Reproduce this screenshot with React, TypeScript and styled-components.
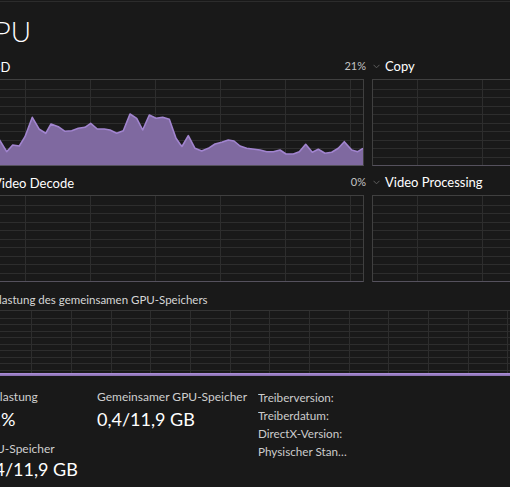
import React from 'react';
import styled, { createGlobalStyle } from 'styled-components';

type Point = [number, number];

const GlobalStyle = createGlobalStyle`
  html, body {
    margin: 0;
    padding: 0;
    background: #191919;
    overflow: hidden;
  }
  body {
    font-family: Lato, "Noto Sans", sans-serif;
    color: #ffffff;
  }
`;

// 3D engine trace, in page pixels
const load3d: Point[] = [
  [-20, 133], [-12, 128], [-5, 134], [0, 140.7], [6.7, 151.7], [12.7, 145], [19.3, 146],
  [25, 136.7], [32.3, 117.3], [39.3, 129.3], [45.7, 133.3], [51, 124], [58.3, 126.7],
  [65, 131.3], [71.7, 130.7], [78.3, 128.3], [85, 127.3], [90.7, 123.3], [97.3, 129],
  [104.3, 129], [110, 130], [116.7, 133.3], [123.3, 130.7], [130, 114], [136.7, 118.3],
  [142.7, 130], [149.3, 115], [156, 118.3], [162.7, 117.3], [169.3, 119.3], [176, 138.3],
  [180, 144], [182, 146.5], [188.3, 135.7], [195, 148.3], [201.7, 151], [208.3, 148.3],
  [215, 144], [221.7, 142.3], [228.3, 140], [234, 141], [240, 146], [246.7, 148.3],
  [260, 150], [266.7, 151.7], [273.3, 151.7], [280, 150], [286, 154], [293.3, 154],
  [299.3, 151.7], [305.7, 144.3], [312.3, 152.3], [318.3, 149.3], [325, 153.3],
  [331.7, 152.3], [338.3, 148.3], [344.3, 141.7], [351.7, 150], [357.7, 151.7], [363, 148.3],
];

const toLocal = (pts: Point[], ox: number, oy: number): Point[] =>
  pts.map(([x, y]) => [x - ox, y - oy]);

interface ChartProps {
  width: number;
  height: number;
  rows: number;
  colStep: number;
  colOffset: number;
  points?: Point[];
  level?: number;
}

const Chart: React.FC<ChartProps> = ({ width, height, rows, colStep, colOffset, points, level }) => {
  const hLines: number[] = [];
  for (let i = 1; i < rows; i++) hLines.push(Math.round((i * height) / rows) + 0.5);
  const vLines: number[] = [];
  for (let x = colOffset; x < width; x += colStep) vLines.push(Math.round(x) + 0.5);

  let area = '';
  let line = '';
  if (points && points.length) {
    line = points.map(([x, y], i) => `${i ? 'L' : 'M'}${x.toFixed(1)},${y.toFixed(1)}`).join(' ');
    area = `M${points[0][0]},${height} ${line.replace(/^M/, 'L')} L${points[points.length - 1][0]},${height} Z`;
  }
  const band = level !== undefined ? Math.max(2, level * height) : 0;

  return (
    <svg width={width} height={height} viewBox={`0 0 ${width} ${height}`} style={{ display: 'block' }}>
      <g stroke="#2d2d2d" strokeWidth={1} shapeRendering="crispEdges">
        {hLines.map(y => (
          <line key={`h${y}`} x1={0} x2={width} y1={y} y2={y} />
        ))}
        {vLines.map(x => (
          <line key={`v${x}`} x1={x} x2={x} y1={0} y2={height} />
        ))}
      </g>
      {area && (
        <>
          <path d={area} fill="#7f69a0" />
          <path d={line} fill="none" stroke="#a184cf" strokeWidth={1.6} strokeLinejoin="round" />
        </>
      )}
      {band > 0 && (
        <>
          <rect x={0} y={height - band} width={width} height={band} fill="#8d74b3" />
          <line x1={0} x2={width} y1={height - band} y2={height - band} stroke="#a88ad6" strokeWidth={1.4} />
        </>
      )}
    </svg>
  );
};

const Chevron: React.FC = () => (
  <ChevronIcon width={7} height={5} viewBox="0 0 7 5">
    <polyline points="0.5,0.8 3.5,3.8 6.5,0.8" fill="none" stroke="#5e5e5e" strokeWidth={1} />
  </ChevronIcon>
);

interface EngineProps {
  name: string;
  percent?: string;
  points?: Point[];
}

const Engine: React.FC<EngineProps> = ({ name, percent, points }) => (
  <EngineBox>
    <EngineHeader>
      <EngineName>
        <Chevron />
        {name}
      </EngineName>
      {percent && <Percent>{percent}</Percent>}
    </EngineHeader>
    <EngineFrame>
      <Chart width={382} height={85} rows={10} colStep={65} colOffset={44} points={points} />
    </EngineFrame>
  </EngineBox>
);

const App: React.FC = () => {
  return (
    <Window>
      <GlobalStyle />
      <Page>
        <Title>GPU</Title>
        <EngineGrid>
          <Engine name="3D" percent="21%" points={toLocal(load3d, -19, 80)} />
          <Engine name="Copy" />
          <Engine name="Video Decode" percent="0%" />
          <Engine name="Video Processing" />
        </EngineGrid>
        <SharedHeader>Auslastung des gemeinsamen GPU-Speichers</SharedHeader>
        <SharedFrame>
          <Chart width={774} height={65} rows={10} colStep={39.67} colOffset={10.7} level={0.4 / 11.9} />
        </SharedFrame>
        <Stats>
          <StatColumn width={117}>
            <StatLabel>Auslastung</StatLabel>
            <StatValue>21%</StatValue>
            <StatLabel $spaced>GPU-Speicher</StatLabel>
            <StatValue $tight>0,4/11,9 GB</StatValue>
          </StatColumn>
          <StatColumn width={161}>
            <StatLabel>Gemeinsamer GPU-Speicher</StatLabel>
            <StatValue>0,4/11,9 GB</StatValue>
          </StatColumn>
          <InfoList>
            <InfoLabel>Treiberversion:</InfoLabel>
            <InfoLabel>Treiberdatum:</InfoLabel>
            <InfoLabel>DirectX-Version:</InfoLabel>
            <InfoLabel>Physischer Standort:</InfoLabel>
          </InfoList>
        </Stats>
      </Page>
    </Window>
  );
};

export default App;

const Window = styled.div`
  height: 487px;
  padding-top: 1px;
  box-sizing: border-box;
  overflow: hidden;
`;

const Page = styled.div`
  border-top: 1px solid #2c2c2c;
  margin-left: -20px;
  width: 776px;
`;

const Title = styled.h1`
  margin: 15px 0 0 -6px;
  font-size: 28px;
  line-height: 29px;
  font-weight: 300;
  color: #ffffff;
`;

const EngineGrid = styled.div`
  display: grid;
  grid-template-columns: 384px 384px;
  column-gap: 8px;
  row-gap: 8px;
  margin-top: 12px;
`;

const EngineBox = styled.div`
  display: flex;
  flex-direction: column;
  gap: 5px;
`;

const EngineHeader = styled.div`
  display: flex;
  align-items: baseline;
  justify-content: space-between;
  height: 16px;
  line-height: 16px;
  padding-left: 1px;
  margin-right: -2px;
`;

const EngineName = styled.span`
  display: flex;
  align-items: center;
  gap: 5px;
  font-size: 13px;
  color: #ffffff;
`;

const ChevronIcon = styled.svg`
  display: block;
  margin-top: 1px;
`;

const Percent = styled.span`
  font-size: 11px;
  color: #c4c4c4;
`;

const EngineFrame = styled.div`
  height: 87px;
  box-sizing: border-box;
  border: 1px solid #404040;
  border-bottom-color: #55515d;
`;

const SharedHeader = styled.div`
  margin-top: 11px;
  font-size: 11.5px;
  line-height: 14px;
  color: #d6d6d6;
`;

const SharedFrame = styled.div`
  margin-top: 3px;
  height: 66px;
  box-sizing: border-box;
  border: 1px solid #333333;
  border-bottom: none;
`;

const Stats = styled.div`
  display: flex;
  margin-top: 12px;
`;

const StatColumn = styled.div<{ width: number }>`
  display: flex;
  flex-direction: column;
  width: ${p => p.width}px;
  flex: none;
`;

const StatLabel = styled.div<{ $spaced?: boolean }>`
  font-size: 12px;
  line-height: 17px;
  color: #cfcfcf;
  white-space: nowrap;
  margin-top: ${p => (p.$spaced ? '9px' : '0')};
`;

const StatValue = styled.div<{ $tight?: boolean }>`
  font-size: 18px;
  line-height: 24px;
  color: #ffffff;
  white-space: nowrap;
  margin-top: ${p => (p.$tight ? '0' : '2px')};
`;

const InfoList = styled.div`
  display: flex;
  flex-direction: column;
  width: 92px;
`;

const InfoLabel = styled.div`
  font-size: 11.7px;
  line-height: 18px;
  color: #cccccc;
  white-space: nowrap;
  overflow: hidden;
  text-overflow: ellipsis;
`;
